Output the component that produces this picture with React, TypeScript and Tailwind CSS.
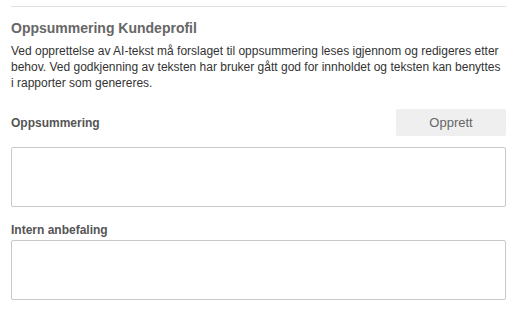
export default function App() {
  return (
    <div className="w-[515px] h-[312px] bg-white pl-[11px] pr-[9px] pt-[6px] font-['Liberation_Sans',Arial,sans-serif]">
      <div className="border-t border-[#e0e0e0]" />
      <h2 className="mt-[13px] text-[14px] leading-[16px] font-bold text-[#666]">Oppsummering Kundeprofil</h2>
      <p className="mt-[7px] text-[12px] leading-[16px] text-[#333]">
        Ved opprettelse av AI-tekst må forslaget til oppsummering leses igjennom og redigeres etter
        behov. Ved godkjenning av teksten har bruker gått god for innholdet og teksten kan benyttes
        i rapporter som genereres.
      </p>
      <div className="mt-[18px] flex items-center justify-between">
        <label className="text-[12px] font-bold text-[#555]">Oppsummering</label>
        <button className="w-[110px] h-[27px] rounded-[2px] bg-[#efefef] text-[13px] text-[#666]">Opprett</button>
      </div>
      <textarea className="mt-[11px] block w-full h-[60px] border border-[#c8c8c8] rounded-[2px] resize-none" />
      <label className="mt-[16px] block text-[12px] leading-[14px] font-bold text-[#555]">Intern anbefaling</label>
      <textarea className="mt-[3px] block w-full h-[60px] border border-[#c8c8c8] rounded-[2px] resize-none" />
    </div>
  );
}
